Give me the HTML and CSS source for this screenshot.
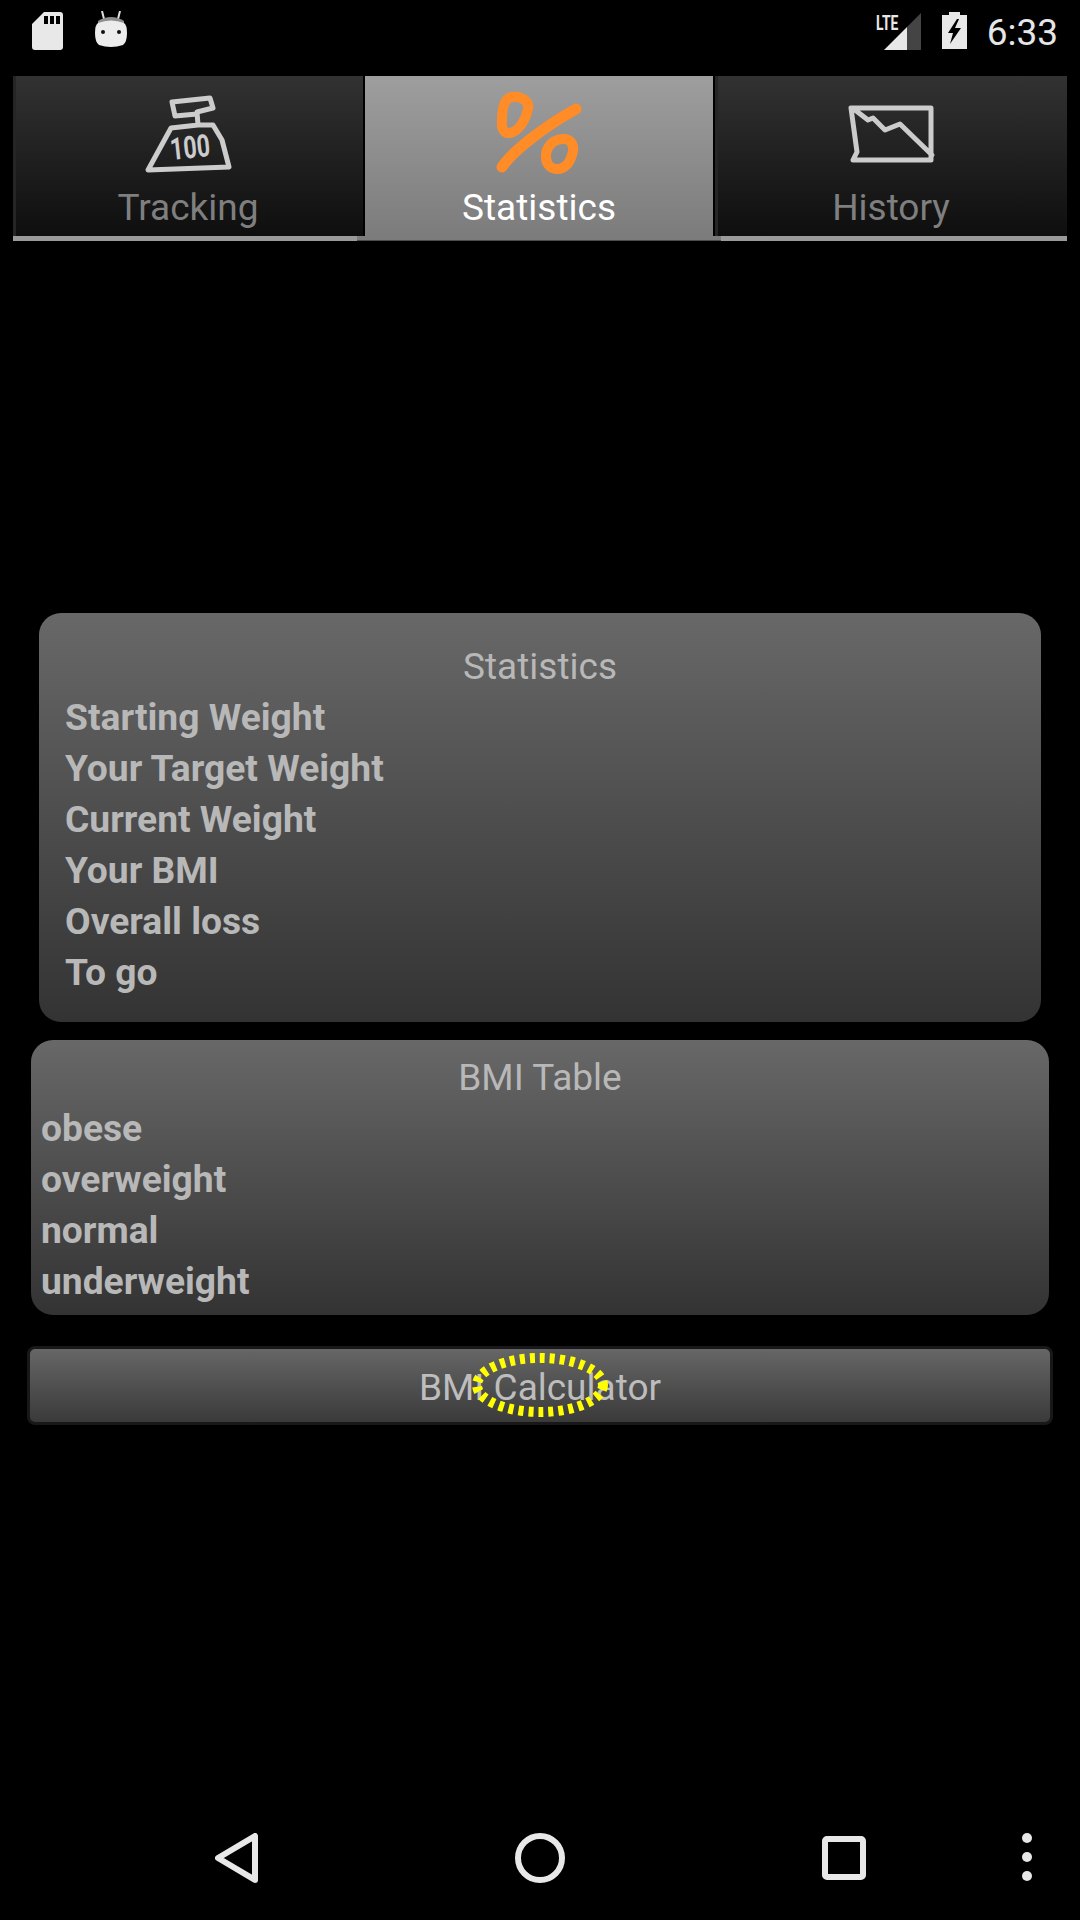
FILE: index.html
```html
<!DOCTYPE html>
<html>

<head>
    <meta charset="UTF-8">
    <meta name="viewport" content="width=device-width, initial-scale=1">
    <title>Weight Tracker - Statistics</title>
    <link rel="stylesheet" href="styles.css">
</head>

<body>
    <div class="screen">
        <div class="status-bar">
            <div class="status-left">
                <svg class="icon-sd" width="31" height="38" viewBox="0 0 31 38">
                    <path fill="#e8e8e8" fill-rule="evenodd" d="M12 0H28Q31 0 31 3V35Q31 38 28 38H3Q0 38 0 35V12ZM12 4V12H16V4ZM18 4V12H22V4ZM24 4V12H28V4Z" />
                </svg>
                <svg class="icon-android" width="32" height="36" viewBox="0 0 32 36">
                    <path stroke="#e0e0e0" stroke-width="2" d="M7 0L9 8M25 0L23 8" />
                    <path fill="#8f8f8f" d="M3 10Q16 2 29 10V13H3Z" />
                    <path fill="#ececec" d="M3 12Q16 7 29 12Q32 14 32 22Q32 31 28 34Q16 38 4 34Q0 31 0 22Q0 14 3 12Z" />
                    <circle cx="8" cy="21" r="2" fill="#111" />
                    <circle cx="24" cy="21" r="2" fill="#111" />
                </svg>
            </div>
            <div class="status-right">
                <div class="signal">
                    <svg width="46" height="38" viewBox="0 0 46 38">
                        <path fill="#444" d="M46 0V37H32V14Z" />
                        <path fill="#e8e8e8" d="M32 14V37H9Z" />
                    </svg>
                    <span class="lte">LTE</span>
                </div>
                <svg class="icon-battery" width="25" height="38" viewBox="0 0 25 38">
                    <path fill="#e8e8e8" fill-rule="evenodd" d="M7 0H18V3H25V37H0V3H7ZM15 7L6 21H11L8 32L19 16H13L17 7Z" />
                </svg>
                <span class="clock">6:33</span>
            </div>
        </div>

        <div class="tabs">
            <div class="tab">
                <svg class="tab-icon" width="90" height="90" viewBox="143 89 90 90">
                    <path class="tab-stroke" d="M172 102L210 98L213 108L197 112L198 125L213 125L222 140L229 167L148 170L171 128L198 125M172 102L175 116L197 114" />
                    <text class="icon-digits" x="170" y="158" textLength="40" lengthAdjust="spacingAndGlyphs" transform="rotate(-6 190 148)">100</text>
                </svg>
                <span class="tab-label">Tracking</span>
            </div>
            <div class="tab tab-active">
                <svg class="tab-icon" width="90" height="90" viewBox="495 90 90 90">
                    <path class="percent-stroke percent-thin" d="M513 98C522 97 531 102 529 110C527 120 521 130 514 133C506 136 502 131 503 122C503 110 505 99 513 98Z" />
                    <path class="percent-stroke" d="M503 168C515 150 550 125 577 110" />
                    <path class="percent-stroke percent-thin" d="M563 140C571 139 575 145 574 152C572 162 567 170 558 170C550 170 546 163 547 155C548 147 554 141 563 140Z" />
                </svg>
                <span class="tab-label">Statistics</span>
            </div>
            <div class="tab">
                <svg class="tab-icon" width="90" height="90" viewBox="846 89 90 90">
                    <path class="tab-stroke" d="M851 108H931V160H853L857 152ZM855 110L868 120L873 118L885 130L900 124L932 155" />
                </svg>
                <span class="tab-label">History</span>
            </div>
        </div>

        <div class="content">
            <div class="panel panel-stats">
                <div class="panel-title">Statistics</div>
                <div class="panel-row">Starting Weight</div>
                <div class="panel-row">Your Target Weight</div>
                <div class="panel-row">Current Weight</div>
                <div class="panel-row">Your BMI</div>
                <div class="panel-row">Overall loss</div>
                <div class="panel-row">To go</div>
            </div>

            <div class="panel panel-bmi">
                <div class="panel-title">BMI Table</div>
                <div class="panel-row">obese</div>
                <div class="panel-row">overweight</div>
                <div class="panel-row">normal</div>
                <div class="panel-row">underweight</div>
            </div>

            <div class="calc-btn">
                BMI Calculator
                <svg class="touch-ring" width="146" height="74" viewBox="0 0 146 74">
                    <ellipse cx="73" cy="37" rx="63" ry="27" />
                </svg>
            </div>
        </div>

        <div class="nav-bar">
            <svg class="nav-back" width="46" height="50" viewBox="0 0 46 50">
                <path class="nav-stroke" d="M40 3V47L3 25Z" />
            </svg>
            <svg class="nav-home" width="50" height="50" viewBox="0 0 50 50">
                <circle class="nav-stroke" cx="25" cy="25" r="22" />
            </svg>
            <svg class="nav-recent" width="44" height="44" viewBox="0 0 44 44">
                <rect class="nav-stroke" x="3" y="3" width="38" height="38" rx="2" />
            </svg>
            <div class="nav-dots">
                <span class="dot"></span>
                <span class="dot"></span>
                <span class="dot"></span>
            </div>
        </div>
    </div>
</body>

</html>
```

FILE: styles.css
```css
body {
    margin: 0;
    background: #000;
    font-family: Roboto, "Liberation Sans", sans-serif;
}

.screen {
    width: 1080px;
    height: 1920px;
    display: flex;
    flex-direction: column;
    overflow: hidden;
}

/* status bar */
.status-bar {
    height: 76px;
    display: flex;
    justify-content: space-between;
    align-items: flex-start;
    box-sizing: border-box;
    padding: 12px 22px 0 32px;
}

.status-left,
.status-right {
    display: flex;
    align-items: flex-start;
}

.status-left {
    gap: 32px;
}

.icon-android {
    margin-top: -1px;
}

.signal {
    position: relative;
    width: 46px;
    height: 38px;
    margin-top: 1px;
}

/* squeezed text sitting over the signal triangle */
.lte {
    position: absolute;
    left: 1px;
    top: 0;
    color: #e8e8e8;
    font-size: 21px;
    font-weight: 700;
    line-height: 20px;
    transform: scaleX(0.66);
    transform-origin: left top;
}

.icon-battery {
    margin-left: 21px;
}

.clock {
    margin-left: 20px;
    color: #e6e6e6;
    font-size: 37px;
    line-height: 42px;
}

/* tabs */
.tabs {
    height: 165px;
    margin: 0 13px;
    display: grid;
    grid-template-columns: 350px 348px 352px;
    gap: 2px;
    border-bottom: 5px solid #9a9a9a;
    box-sizing: border-box;
}

.tab {
    display: flex;
    flex-direction: column;
    align-items: center;
    position: relative;
    background: linear-gradient(#323232, #0e0e0e);
    box-shadow: inset 3px 0 0 #262626;
}

.tab-icon {
    margin-top: 13px;
}

.tab-label {
    color: #7f7f7f;
    font-size: 37px;
    line-height: 42px;
    margin-top: 8px;
}

.tab-stroke {
    fill: none;
    stroke: #cccccc;
    stroke-width: 5;
    stroke-linejoin: round;
    stroke-linecap: round;
}

.icon-digits {
    font-size: 31px;
    font-weight: 700;
    fill: #cccccc;
}

.tab-active {
    background: linear-gradient(#9e9e9e, #7c7c7c);
    box-shadow: none;
}

.tab-active .tab-label {
    color: #fff;
}

/* selected tab runs down over the underline */
.tab-active::after {
    content: "";
    position: absolute;
    left: -8px;
    right: -8px;
    bottom: -5px;
    height: 5px;
    background: #7c7c7c;
    border-bottom: 1px solid #4c4c4c;
    box-sizing: border-box;
}

.percent-stroke {
    fill: none;
    stroke: #ff8c26;
    stroke-width: 11;
    stroke-linecap: round;
}

.percent-thin {
    stroke-width: 10;
}

/* main content */
.content {
    flex: 1;
    display: flex;
    flex-direction: column;
    padding-top: 372px;
}

.panel {
    border-radius: 22px;
    background: linear-gradient(#686868, #333);
    color: #b8b8b8;
    font-size: 37px;
    line-height: 51px;
}

.panel-stats {
    margin: 0 39px;
    padding: 28px 26px 24px;
}

.panel-bmi {
    margin: 18px 31px 0;
    padding: 12px 10px 8px;
}

.panel-title {
    text-align: center;
}

.panel-row {
    font-size: 37.2px;
    font-weight: 700;
}

.calc-btn {
    position: relative;
    margin: 31px 27px 0;
    height: 79px;
    box-sizing: border-box;
    border: 3px solid #181818;
    border-radius: 8px;
    background: linear-gradient(#666, #3a3a3a);
    color: #bdbdbd;
    font-size: 37px;
    line-height: 77px;
    text-align: center;
}

/* yellow touch marker over the button */
.touch-ring {
    position: absolute;
    left: 437px;
    top: -1px;
}

.touch-ring ellipse {
    fill: none;
    stroke: #ffff00;
    stroke-width: 10;
    stroke-dasharray: 5 5;
}

/* bottom nav */
.nav-bar {
    height: 123px;
    display: flex;
    align-items: flex-start;
    box-sizing: border-box;
    padding: 36px 0 0 215px;
}

.nav-stroke {
    fill: none;
    stroke: #e8e8e8;
    stroke-width: 6;
    stroke-linejoin: round;
}

.nav-home {
    margin-left: 254px;
}

.nav-recent {
    margin-left: 257px;
    margin-top: 3px;
}

.nav-dots {
    margin-left: 156px;
    display: flex;
    flex-direction: column;
    gap: 9px;
}

.dot {
    width: 10px;
    height: 10px;
    border-radius: 50%;
    background: #e8e8e8;
}
```
